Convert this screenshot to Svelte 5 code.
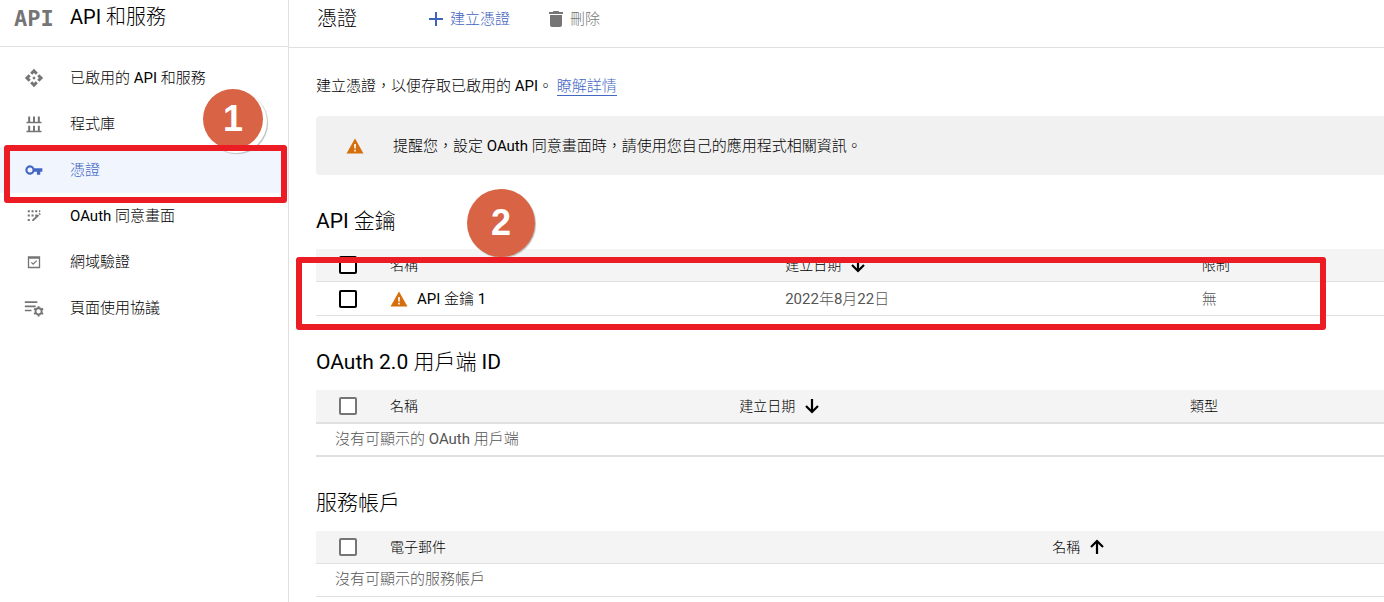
<script>
  const nav = [
    { icon: 'api', label: '已啟用的 API 和服務' },
    { icon: 'library', label: '程式庫' },
    { icon: 'key', label: '憑證', active: true },
    { icon: 'consent', label: 'OAuth 同意畫面' },
    { icon: 'domain', label: '網域驗證' },
    { icon: 'agreement', label: '頁面使用協議' }
  ];

  const sections = [
    {
      title: 'API 金鑰',
      dark: true,
      cols: [
        { label: '名稱', share: 37 },
        { label: '建立日期', share: 39, sort: 'down' },
        { label: '限制' }
      ],
      rows: [['API 金鑰 1', '2022年8月22日', '無']]
    },
    {
      title: 'OAuth 2.0 用戶端 ID',
      thick: true,
      cols: [
        { label: '名稱', share: 32.7 },
        { label: '建立日期', share: 42.2, sort: 'down' },
        { label: '類型' }
      ],
      empty: '沒有可顯示的 OAuth 用戶端'
    },
    {
      title: '服務帳戶',
      cols: [
        { label: '電子郵件', share: 62 },
        { label: '名稱', sort: 'up' }
      ],
      empty: '沒有可顯示的服務帳戶'
    }
  ];
</script>

{#snippet warning()}
  <svg class="warn" viewBox="0 0 18 16" aria-hidden="true">
    <path d="M9 0.5 17.5 15.5H0.5Z" fill="#d56e0c" />
    <path d="M8.2 6h1.6v4.5H8.2zM8.2 11.7h1.6v1.7H8.2z" fill="#fff" />
  </svg>
{/snippet}

<div class="page" lang="zh-Hant">
  <aside>
    <div class="product">
      <span class="logo">API</span>
      <span class="name">API 和服務</span>
    </div>
    <nav>
      {#each nav as item}
        <a href="#{item.icon}" class:active={item.active}>
          <svg viewBox="0 0 24 24" fill="currentColor" aria-hidden="true">
            {#if item.icon === 'api'}
              <path d="M14 12l-2 2-2-2 2-2 2 2zm-2-6l2.12 2.12 2.5-2.5L12 1 7.38 5.62l2.5 2.5L12 6zm-6 6l2.12-2.12-2.5-2.5L1 12l4.62 4.62 2.5-2.5L6 12zm12 0l-2.12 2.12 2.5 2.5L23 12l-4.62-4.62-2.5 2.5L18 12zm-6 6l-2.12-2.12-2.5 2.5L12 23l4.62-4.62-2.5-2.5L12 18z" />
            {:else if item.icon === 'library'}
              <path d="M3 9.2h18V11H3zM5 3h2.4v6.2H5zM10.8 3h2.4v6.2h-2.4zM16.6 3H19v6.2h-2.4zM3 20.2h18V22H3zM5 14h2.4v6.2H5zM10.8 14h2.4v6.2h-2.4zM16.6 14H19v6.2h-2.4z" />
            {:else if item.icon === 'key'}
              <path fill-rule="evenodd" d="M12.4 10A5.6 5.6 0 1 0 12.4 14H15.5V17.6H19.5V14H22V10ZM7.2 9a3 3 0 1 1 0 6 3 3 0 0 1 0-6Z" />
            {:else if item.icon === 'consent'}
              <path d="M4.5 5H7v2.4H4.5zM9 5h2.5v2.4H9zM13.5 5H16v2.4h-2.5zM18 5h1.5v2.4H18zM4.5 10.2H7v2.4H4.5zM9 10.2h2.5v2.4H9zM13.5 10.2H16v2.4h-2.5zM4.5 15.6H7V18H4.5zM9.8 16.5l6.8-6.3 1.6 1.6-6.8 6.2H9.8zM17.4 9.4l1.2-1.1 1.6 1.6-1.2 1.2z" />
            {:else if item.icon === 'domain'}
              <path fill-rule="evenodd" d="M4.6 5h14.8v14.4H4.6zM6.2 8.2v9.6h11.6V8.2zM14.8 9.8l1 1-4.8 4.8-2.7-2.7 1-1 1.7 1.7z" />
            {:else}
              <path d="M1 4h15v2H1zM1 9h13v2H1zM1 14h8v2H1z" />
              <circle cx="17.5" cy="16" r="3.7" fill="none" stroke="currentColor" stroke-width="2.2" />
              <path d="M16.3 9.8h2.4v2.6h-2.4zM16.3 19.6h2.4v2.6h-2.4zM11.5 13.9l1.2-2.1 2.2 1.3-1.2 2zM20.1 18.9l1.2-2 2.2 1.3-1.2 2zM12.7 20.2l-1.2-2 2.2-1.3 1.2 2zM21.3 15.1l-1.2-2 2.2-1.3 1.2 2.1z" />
            {/if}
          </svg>
          {item.label}
        </a>
      {/each}
    </nav>
  </aside>

  <main>
    <header>
      <h1>憑證</h1>
      <button class="create">
        <svg viewBox="0 0 14 14" aria-hidden="true"><path d="M6 0h2v6h6v2H8v6H6V8H0V6h6z" fill="currentColor" /></svg>
        建立憑證
      </button>
      <button class="delete" disabled>
        <svg viewBox="0 0 14 16" aria-hidden="true"><path d="M4.5 0h5l.8 1H14v2H0V1h3.7zM1 4h12v10a2 2 0 0 1-2 2H3a2 2 0 0 1-2-2z" fill="#757575" /></svg>
        刪除
      </button>
    </header>

    <div class="content">
      <p class="intro">建立憑證，以便存取已啟用的 API。 <a href="#learn">瞭解詳情</a></p>
      <div class="notice">
        {@render warning()}
        <span>提醒您，設定 OAuth 同意畫面時，請使用您自己的應用程式相關資訊。</span>
      </div>

      {#each sections as s}
        <section>
          <h2>{s.title}</h2>
          <table class:thick={s.thick} class:dark={s.dark}>
            <colgroup>
              <col class="pick" />
              {#each s.cols as c}
                <col style:width={c.share ? `${c.share}%` : null} />
              {/each}
            </colgroup>
            <thead>
              <tr>
                <th class="check"><input type="checkbox" aria-label={s.title} /></th>
                {#each s.cols as c}
                  <th scope="col">
                    <span class="cell">
                      {c.label}
                      {#if c.sort}
                        <svg class="arrow" class:up={c.sort === 'up'} viewBox="0 0 16 16" aria-hidden="true">
                          <path d="M8 1v13M2 8l6 6 6-6" fill="none" stroke="#000" stroke-width="2.2" />
                        </svg>
                      {/if}
                    </span>
                  </th>
                {/each}
              </tr>
            </thead>
            <tbody>
              {#if s.rows}
                {#each s.rows as row}
                  <tr>
                    <td class="check"><input type="checkbox" aria-label={row[0]} /></td>
                    <td><a class="cell key" href="#item">{@render warning()}{row[0]}</a></td>
                    <td>{row[1]}</td>
                    <td>{row[2]}</td>
                  </tr>
                {/each}
              {:else}
                <tr><td class="empty" colspan={s.cols.length + 1}>{s.empty}</td></tr>
              {/if}
            </tbody>
          </table>
        </section>
      {/each}
    </div>
  </main>

  <span class="badge one">1</span>
  <span class="badge two">2</span>
  <span class="frame nav-frame"></span>
  <span class="frame table-frame"></span>
</div>

<style>
  :global(body) {
    margin: 0;
    background: #fff;
  }
  .page {
    position: relative;
    display: flex;
    min-height: 100vh;
    overflow: hidden;
    color: #000;
    font: 15px/20px Roboto, 'Noto Sans CJK TC Light', 'Noto Sans CJK TC DemiLight', 'Noto Sans CJK TC', sans-serif;
  }
  svg {
    display: block;
    flex: none;
  }
  aside {
    box-sizing: border-box;
    flex: none;
    width: 289px;
    border-right: 1px solid #e0e0e0;
  }
  .product {
    display: flex;
    align-items: center;
    box-sizing: border-box;
    height: 47px;
    padding: 0 16px 12px 14px;
    border-bottom: 1px solid #e0e0e0;
  }
  .logo {
    width: 56px;
    padding-top: 4px;
    color: #757575;
    font: bold 22px/24px 'DejaVu Sans Mono', monospace;
  }
  .name {
    font-size: 20px;
  }
  nav {
    padding-top: 8px;
  }
  nav a {
    display: flex;
    align-items: center;
    gap: 26px;
    height: 46px;
    padding-left: 24px;
    color: inherit;
    text-decoration: none;
  }
  nav svg {
    width: 20px;
    height: 20px;
    color: #757575;
  }
  nav .active {
    background: #f0f5fe;
    color: #4467c4;
  }
  nav .active svg {
    color: #4467c4;
  }
  main {
    flex: 1;
    min-width: 0;
  }
  header {
    display: flex;
    align-items: center;
    box-sizing: border-box;
    height: 48px;
    padding: 0 28px 10px;
    border-bottom: 1px solid #e0e0e0;
  }
  h1,
  h2 {
    margin: 0;
    font-weight: 400;
    line-height: 24px;
  }
  h1 {
    margin-right: 72px;
    font-size: 20px;
  }
  h2 {
    margin-bottom: 16px;
    font-size: 21px;
  }
  button {
    display: flex;
    align-items: center;
    gap: 7px;
    margin: 0 39px 0 0;
    padding: 0;
    border: 0;
    background: none;
    font: inherit;
  }
  .create {
    color: #3f62bd;
  }
  .create svg {
    width: 14px;
    height: 14px;
  }
  .delete {
    color: #757575;
  }
  .delete svg {
    width: 14px;
    height: 16px;
  }
  .content {
    padding: 28px 0 0 27px;
  }
  .intro {
    margin: 0 0 20px;
  }
  .intro a {
    color: #4467c4;
    text-decoration: none;
    border-bottom: 1px solid #4467c4;
  }
  .notice {
    display: flex;
    align-items: center;
    gap: 29px;
    min-height: 59px;
    padding-left: 30px;
    border-radius: 4px 0 0 4px;
    background: #f1f1f1;
  }
  .warn {
    width: 18px;
    height: 16px;
  }
  section {
    padding-top: 34px;
  }
  table {
    width: 100%;
    table-layout: fixed;
    border-collapse: separate;
    border-spacing: 0;
  }
  .pick {
    width: 74px;
  }
  th,
  td {
    height: 32px;
    padding: 0;
    border-bottom: 1px solid #e0e0e0;
    text-align: left;
    font-weight: 400;
  }
  th {
    background: #f4f4f4;
    font-size: 14px;
  }
  td {
    height: 33px;
    color: #555;
  }
  .thick th,
  .thick td {
    border-bottom-width: 2px;
  }
  .check {
    padding-left: 23px;
  }
  input {
    display: block;
    appearance: none;
    box-sizing: border-box;
    width: 18px;
    height: 18px;
    margin: 0;
    border: 2px solid #757575;
    border-radius: 2px;
    background: #fff;
  }
  .dark input {
    border-color: #000;
  }
  .cell {
    display: flex;
    align-items: center;
    gap: 9px;
  }
  .key {
    color: #000;
    text-decoration: none;
  }
  .arrow {
    width: 16px;
    height: 16px;
  }
  .up {
    transform: rotate(180deg);
  }
  .empty {
    height: 30px;
    padding: 0 0 2px 19px;
  }
  .thick .empty {
    height: 29px;
  }
  .badge {
    position: absolute;
    display: flex;
    align-items: center;
    justify-content: center;
    border-radius: 50%;
    background: #d86445;
    color: #fff;
    font-family: 'Liberation Sans', sans-serif;
    font-weight: 700;
    font-size: 36px;
  }
  .one {
    left: 203px;
    top: 89px;
    width: 60px;
    height: 60px;
    box-shadow: 3px 3px 0 1px #fff, 4px 4px 1px 1px #bbb;
  }
  .two {
    left: 467px;
    top: 189px;
    width: 68px;
    height: 68px;
    box-shadow: 1px 1px 1px #bbb;
  }
  .frame {
    position: absolute;
    box-sizing: border-box;
    border: 6px solid #ec1c24;
    border-radius: 3px;
    pointer-events: none;
  }
  .nav-frame {
    left: 4px;
    top: 145px;
    width: 283px;
    height: 58px;
  }
  .table-frame {
    left: 296px;
    top: 257px;
    width: 1030px;
    height: 73px;
  }
</style>
